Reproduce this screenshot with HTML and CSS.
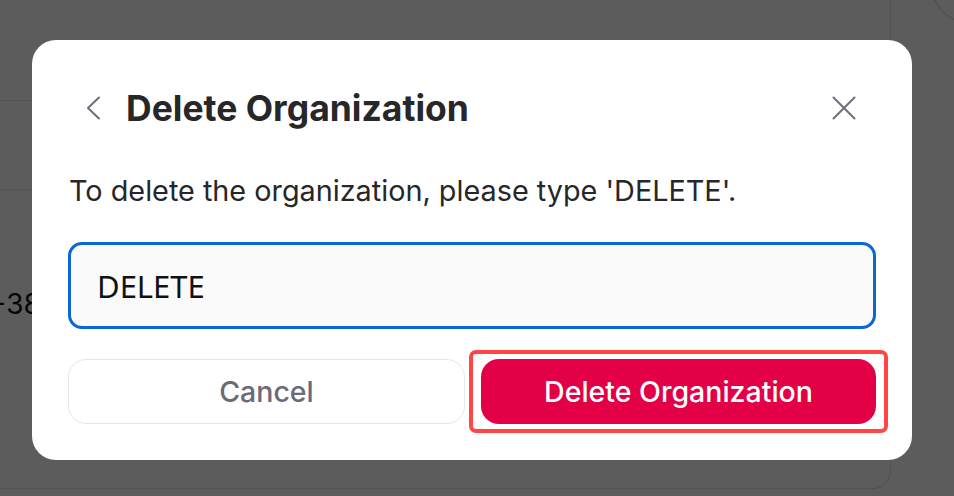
FILE: index.html
```html
<!DOCTYPE html>
<html lang="en">
<head>
<meta charset="utf-8">
<title>Delete Organization</title>
<link rel="stylesheet" href="styles.css">
</head>
<body>
<div class="page">
  <div class="card">
    <div class="row row-first"></div>
    <div class="row"></div>
    <div class="row row-phone"><span class="phone">+380 67 123 45 67</span></div>
    <div class="row row-last"></div>
  </div>
  <div class="side">
    <div class="avatar"></div>
  </div>
</div>

<div class="overlay">
  <div class="modal" role="dialog" aria-labelledby="modal-title">
    <div class="modal-header">
      <button class="icon-btn back" aria-label="Back">
        <svg width="16" height="24" viewBox="0 0 16 24" fill="none" stroke="currentColor" stroke-width="2" stroke-linecap="round" stroke-linejoin="round"><path d="M14 1.5 3 12l11 10.5"/></svg>
      </button>
      <h2 id="modal-title" class="modal-title">Delete Organization</h2>
      <button class="icon-btn close" aria-label="Close">
        <svg width="24" height="24" viewBox="0 0 24 24" fill="none" stroke="currentColor" stroke-width="2" stroke-linecap="round"><path d="M1.5 1.5l21 21M22.5 1.5l-21 21"/></svg>
      </button>
    </div>
    <p class="modal-text">To delete the organization, please type 'DELETE'.</p>
    <input class="confirm-input" type="text" value="DELETE">
    <div class="modal-actions">
      <button class="btn btn-cancel">Cancel</button>
      <button class="btn btn-danger">Delete Organization</button>
    </div>
  </div>
</div>
</body>
</html>
```

FILE: styles.css
```css
* { box-sizing: border-box; }

html, body {
  margin: 0;
  height: 100%;
}

body {
  background: #ffffff;
  font-family: Inter, "Noto Sans", "Liberation Sans", sans-serif;
  color: #222;
  overflow: hidden;
}

/* underlying page (dimmed by overlay) */
.page {
  display: flex;
  height: 100%;
}

.card {
  width: 891px;
  height: 489px;
  border-right: 1px solid #e4e4e4;
  border-bottom: 1px solid #e4e4e4;
  border-bottom-right-radius: 18px;
  display: flex;
  flex-direction: column;
}

.row {
  height: 89px;
  border-bottom: 1px solid #ececec;
  flex: none;
}

.row-first { height: 101px; }

.row-phone {
  height: 228px;
  border-bottom: none;
  display: flex;
  align-items: center;
  margin-left: -12px;
}

.phone {
  font-size: 28px;
  color: #111;
  white-space: nowrap;
}

.row-last { border-bottom: none; }

.side {
  flex: 1;
  position: relative;
  overflow: hidden;
}

.avatar {
  position: absolute;
  left: 40px;
  top: -56px;
  width: 80px;
  height: 80px;
  border-radius: 50%;
  border: 1px solid #f1c0c0;
}

/* overlay + modal */
.overlay {
  position: fixed;
  inset: 0;
  background: rgba(0, 0, 0, 0.64);
  display: flex;
  align-items: flex-start;
  padding: 40px 0 0 32px;
}

.modal {
  width: 880px;
  height: 420px;
  background: #fff;
  border-radius: 24px;
  padding: 44px 36px 36px;
  display: flex;
  flex-direction: column;
}

.modal-header {
  display: flex;
  align-items: center;
  height: 48px;
}

.icon-btn {
  border: none;
  background: none;
  padding: 0;
  color: #6e6e7c;
  display: flex;
  align-items: center;
  justify-content: center;
  cursor: pointer;
}

.back {
  margin-left: 17px;
  width: 16px;
  height: 24px;
}

.modal-title {
  margin: 0 0 0 25px;
  font-size: 35.5px;
  font-weight: 700;
  color: #27272a;
  flex: 1;
}

.close {
  width: 24px;
  height: 24px;
  margin-right: 20px;
}

.modal-text {
  margin: 42px 0 0 1px;
  font-size: 28.8px;
  color: #27272a;
  line-height: 34px;
}

.confirm-input {
  margin-top: 34px;
  width: 100%;
  height: 87px;
  border: 3px solid #0b66d6;
  border-radius: 14px;
  background: #fafafa;
  padding: 0 26px;
  font-family: "Noto Sans", sans-serif;
  font-size: 31px;
  color: #111;
  outline: none;
}

.modal-actions {
  margin-top: 30px;
  display: flex;
  gap: 16px;
}

.btn {
  flex: 1;
  height: 65px;
  border-radius: 18px;
  font-family: Inter, "Noto Sans", sans-serif;
  font-size: 28.5px;
  font-weight: 500;
  cursor: pointer;
}

.btn-cancel {
  background: #fff;
  border: 1px solid #e6e6e8;
  color: #6b6b78;
}

.btn-danger {
  position: relative;
  background: #e30046;
  border: none;
  color: #fff;
}

.btn-danger::after {
  content: "";
  position: absolute;
  inset: -9px -12px;
  border: 4px solid #ff4545;
  border-radius: 7px;
  pointer-events: none;
}
```
